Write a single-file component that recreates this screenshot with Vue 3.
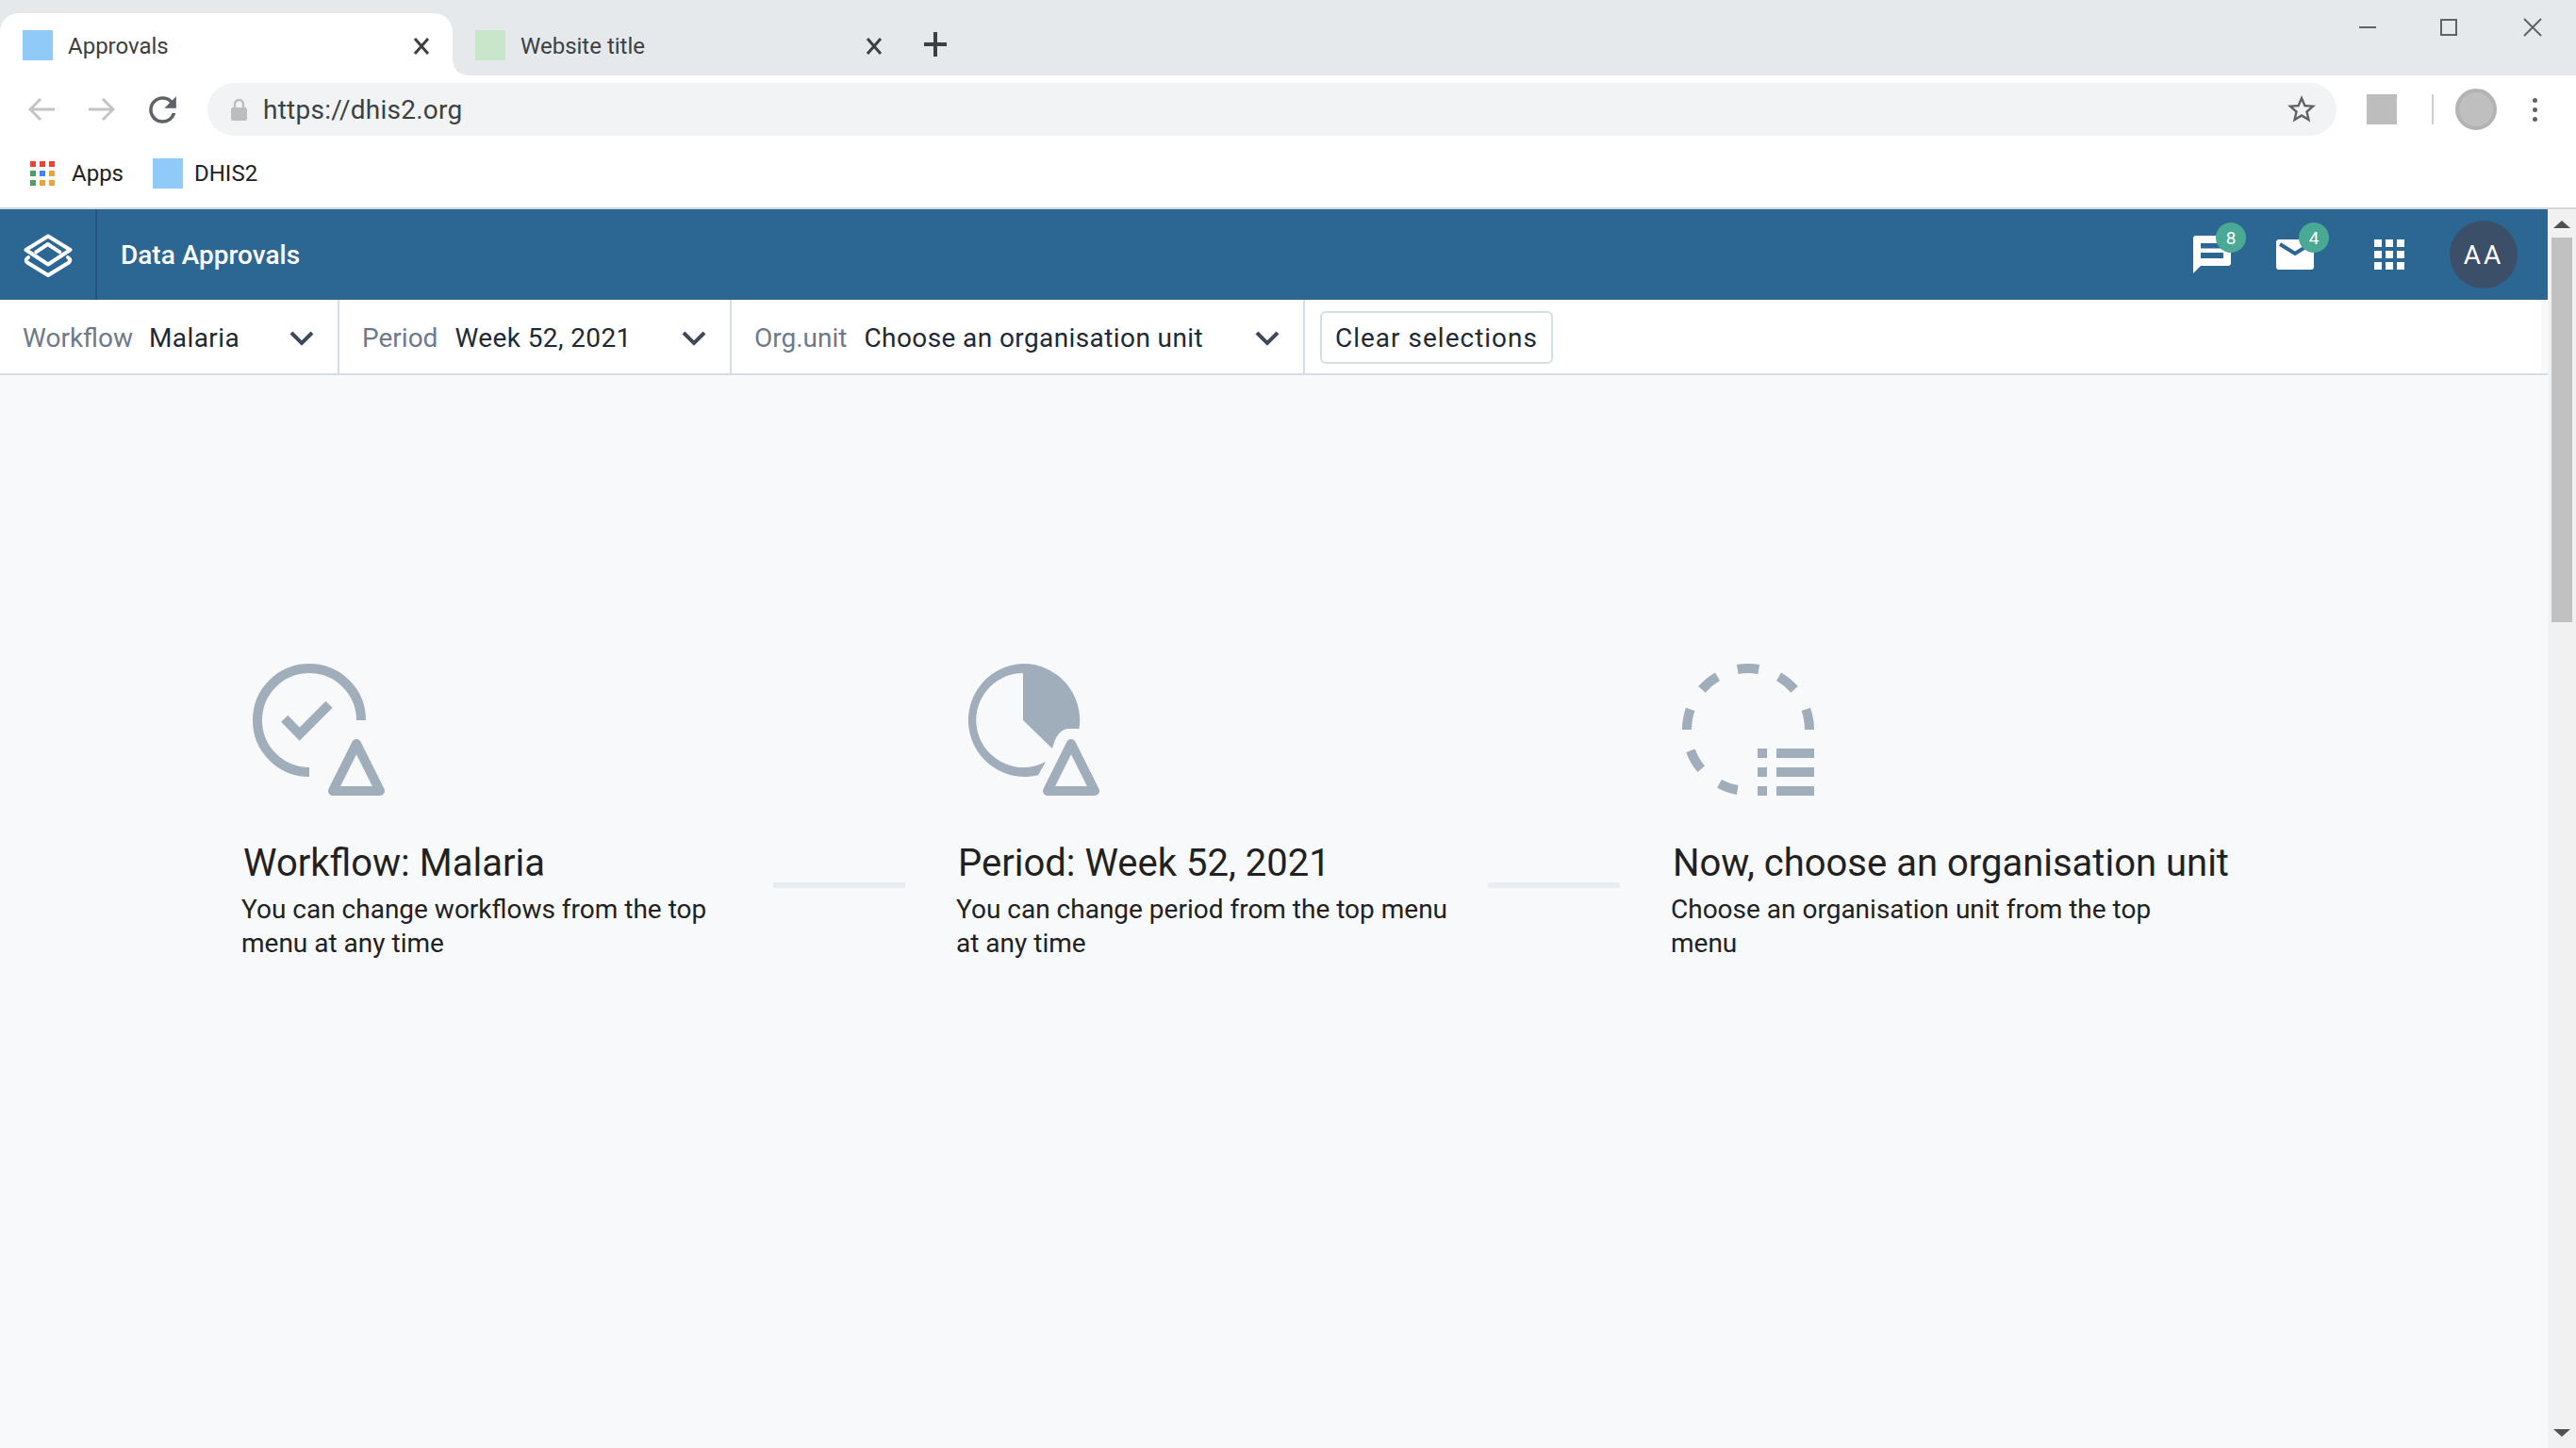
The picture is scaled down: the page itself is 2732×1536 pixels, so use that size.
<script setup>
const pt = (deg, r = 65) => {
  const a = (deg * Math.PI) / 180
  return `${(75 + r * Math.sin(a)).toFixed(2)} ${(70 - r * Math.cos(a)).toFixed(2)}`
}
const dashes = [[-10, 10], [30, 49], [70.6, 90], [-90, -70.6], [-49, -30], [-130, -110], [-170, -152]]
const dashPaths = dashes.map(([a, b]) => `M${pt(a)} A65 65 0 0 1 ${pt(b)}`)
const appColors = ['#ea4335', '#ea4335', '#ea4335', '#4f9d69', '#4285f4', '#e8a33d', '#4f9d69', '#e8a33d', '#e8a33d']
const filters = [
  { label: 'Workflow', value: 'Malaria', cls: 'f1' },
  { label: 'Period', value: 'Week 52, 2021', cls: 'f2' },
  { label: 'Org.unit', value: 'Choose an organisation unit', cls: 'f3' },
]
</script>

<template>
  <div class="page">
    <div class="tabstrip">
      <div class="tab active">
        <span class="fav blue"></span>
        <span class="tab-title">Approvals</span>
        <svg class="tab-x" width="20" height="20" viewBox="0 0 20 20"><path d="M3 2l14 16M17 2L3 18" stroke="#3c4043" stroke-width="3" fill="none" /></svg>
      </div>
      <div class="tab">
        <span class="fav green"></span>
        <span class="tab-title">Website title</span>
        <svg class="tab-x" width="20" height="20" viewBox="0 0 20 20"><path d="M3 2l14 16M17 2L3 18" stroke="#3c4043" stroke-width="3" fill="none" /></svg>
      </div>
      <svg class="plus" width="24" height="26" viewBox="0 0 24 26"><path d="M12 0v26M0 13h24" stroke="#3c4043" stroke-width="4" fill="none" /></svg>
      <div class="winctl">
        <svg width="18" height="18" viewBox="0 0 18 18"><path d="M0 9h18" stroke="#5f6368" stroke-width="2" /></svg>
        <svg class="maxi" width="18" height="18" viewBox="0 0 18 18"><rect x="1" y="1" width="16" height="16" fill="none" stroke="#5f6368" stroke-width="2" /></svg>
        <svg width="20" height="20" viewBox="0 0 20 20"><path d="M1 1l18 18M19 1L1 19" stroke="#5f6368" stroke-width="2" fill="none" /></svg>
      </div>
    </div>

    <div class="toolbar">
      <div class="nav">
        <svg width="28" height="24" viewBox="0 0 28 24"><path d="M28 12H2M13 1L2 12l11 11" stroke="#c4c4c4" stroke-width="3" fill="none" /></svg>
        <svg width="28" height="24" viewBox="0 0 28 24"><path d="M0 12h26M15 1l11 11-11 11" stroke="#c4c4c4" stroke-width="3" fill="none" /></svg>
        <svg class="reload" width="43" height="43" viewBox="0 0 24 24"><path fill="#5f6368" d="M17.65 6.35A7.958 7.958 0 0 0 12 4c-4.42 0-7.99 3.58-7.99 8s3.57 8 7.99 8c3.73 0 6.84-2.55 7.73-6h-2.08A5.99 5.99 0 0 1 12 18c-3.31 0-6-2.69-6-6s2.69-6 6-6c1.66 0 3.14.69 4.22 1.78L13 11h7V4l-2.35 2.35z" /></svg>
      </div>
      <div class="omnibox">
        <svg width="17" height="23" viewBox="0 0 17 23"><path d="M4 10V5.5a4.5 4.5 0 0 1 9 0V10" fill="none" stroke="#bdbdbd" stroke-width="2.4" /><rect y="9" width="17" height="14" rx="2" fill="#bdbdbd" /></svg>
        <span class="url">https://dhis2.org</span>
        <svg class="star" width="36" height="36" viewBox="0 0 24 24"><path fill="#5f6368" d="M22 9.24l-7.19-.62L12 2 9.19 8.63 2 9.24l5.46 4.73L5.82 21 12 17.27 18.18 21l-1.63-7.03L22 9.24zM12 15.4l-3.76 2.27 1-4.28-3.32-2.88 4.38-.38L12 6.1l1.71 4.04 4.38.38-3.32 2.88 1 4.28L12 15.4z" /></svg>
      </div>
      <span class="ext"></span>
      <span class="tooldiv"></span>
      <span class="profile"></span>
      <div class="dots"><i></i><i></i><i></i></div>
    </div>

    <div class="bookmarks">
      <div class="appsgrid"><i v-for="(c, i) in appColors" :key="i" :style="{ background: c }"></i></div>
      <span class="bm-text">Apps</span>
      <span class="fav blue bm-fav"></span>
      <span class="bm-text">DHIS2</span>
    </div>

    <div class="viewport">
      <div class="app">
        <header class="headerbar">
          <div class="logo">
            <svg width="54" height="48" viewBox="0 0 54 48" fill="none" stroke="#fff" stroke-width="4" stroke-linejoin="round" stroke-linecap="round">
              <path d="M27 4.5L50.5 19 27 34.5 3.5 19z" />
              <path d="M14.3 21.3L26.7 13l12.6 8.3" />
              <path d="M6 27Q2 30 5 32.500L27 46 49 32.500Q52 30 48 27" />
            </svg>
          </div>
          <div class="title">Data Approvals</div>
          <div class="hicons">
            <div class="hicon chat">
              <svg width="40" height="40" viewBox="0 0 40 40"><path fill="#fff" fill-rule="evenodd" d="M3 0h34a3 3 0 0 1 3 3v26a3 3 0 0 1-3 3H8l-8 8V3a3 3 0 0 1 3-3zM8 8v5.500h24V8zM8 18v6h24v-6z" /></svg>
              <span class="badge">8</span>
            </div>
            <div class="hicon mail">
              <svg width="40" height="32" viewBox="0 0 40 32"><path fill="#fff" d="M3 0h34a3 3 0 0 1 3 3v26a3 3 0 0 1-3 3H3a3 3 0 0 1-3-3V3a3 3 0 0 1 3-3z" /><path d="M4 5l16 10L36 5" fill="none" stroke="#2c6693" stroke-width="4" /></svg>
              <span class="badge">4</span>
            </div>
            <div class="hgrid"><i v-for="n in 9" :key="n"></i></div>
            <div class="avatar">AA</div>
          </div>
        </header>

        <div class="filters">
          <div v-for="f in filters" :key="f.label" class="filter" :class="f.cls">
            <span class="flabel">{{ f.label }}</span>
            <span class="fvalue">{{ f.value }}</span>
            <svg class="chev" width="26" height="16" viewBox="0 0 26 16"><path d="M2 2l11 11L24 2" fill="none" stroke="#404b5a" stroke-width="4" /></svg>
          </div>
          <button class="clear">Clear selections</button>
        </div>

        <main class="steps">
          <section class="step">
            <svg class="sicon" width="160" height="150" viewBox="0 0 160 150" fill="none" stroke="#a0adba" stroke-width="10">
              <path d="M130 60A55 55 0 1 0 75 115" />
              <path d="M48.7 58.3L64.7 74.7 96 43.3" />
              <path d="M125 85L100 135H150z" stroke-linejoin="round" />
            </svg>
            <h2>Workflow: Malaria</h2>
            <p>You can change workflows from the top menu at any time</p>
          </section>
          <div class="connector"></div>
          <section class="step">
            <svg class="sicon second" width="160" height="150" viewBox="0 0 160 150" fill="none" stroke="#a0adba" stroke-width="10">
              <path fill="#a0adba" stroke="none" d="M75 0A60 60 0 0 1 134.5 69L124 69Q111 69 106 90L75 60Z" />
              <path fill="#a0adba" stroke="none" d="M91 118.3A60 60 0 1 1 75 0V10A50 50 0 1 0 99 104Z" />
              <path d="M125 85L100 135H150z" stroke-linejoin="round" />
            </svg>
            <h2>Period: Week 52, 2021</h2>
            <p>You can change period from the top menu at any time</p>
          </section>
          <div class="connector"></div>
          <section class="step">
            <svg class="sicon third" width="160" height="150" viewBox="0 0 160 150" fill="none" stroke="#a0adba" stroke-width="10">
              <path v-for="(d, i) in dashPaths" :key="i" :d="d" />
              <g fill="#a0adba" stroke="none">
                <rect x="85" y="90" width="10" height="10" /><rect x="105" y="90" width="40" height="10" />
                <rect x="85" y="110" width="10" height="10" /><rect x="105" y="110" width="40" height="10" />
                <rect x="85" y="130" width="10" height="10" /><rect x="105" y="130" width="40" height="10" />
              </g>
            </svg>
            <h2>Now, choose an organisation unit</h2>
            <p>Choose an organisation unit from the top menu</p>
          </section>
        </main>
      </div>

      <div class="scrollbar">
        <span class="arrow up"></span>
        <span class="thumb"></span>
        <span class="arrow down"></span>
      </div>
    </div>
  </div>
</template>

<style>
html, body { margin: 0; padding: 0; background: #fff; overflow: hidden; }
</style>

<style scoped>
.page { width: 2732px; height: 1536px; display: flex; flex-direction: column; font-family: Roboto, "Liberation Sans", sans-serif; overflow: hidden; }

.tabstrip { height: 80px; flex: none; background: #e6e9ec; display: flex; align-items: flex-end; }
.tab { width: 480px; height: 66px; flex: none; display: flex; align-items: center; padding: 2px 0 0 24px; box-sizing: border-box; position: relative; color: #3c4043; }
.tab.active { background: #fff; border-radius: 20px 20px 0 0; }
.tab.active::after { content: ""; position: absolute; right: -16px; bottom: 0; width: 16px; height: 16px; background: radial-gradient(circle at 100% 0, #e6e9ec 15.5px, #fff 16px); }
.fav { width: 32px; height: 32px; flex: none; display: block; }
.fav.blue { background: #90caf9; }
.fav.green { background: #c8e6c9; }
.tab-title { font-size: 24px; margin-left: 16px; padding-top: 2px; flex: 1; }
.tab-x { position: absolute; right: 23px; top: 25px; }
.plus { margin: 0 0 20px 20px; }
.winctl { margin-left: auto; align-self: flex-start; display: flex; align-items: center; gap: 68px; padding: 19px 36px 0 0; }
.maxi { margin-right: 2px; }

.toolbar { height: 72px; flex: none; box-sizing: border-box; background: #fff; display: flex; align-items: center; }
.nav { width: 220px; flex: none; display: flex; align-items: center; padding-left: 30px; box-sizing: border-box; gap: 36px; }
.reload { margin-left: -7px; }
.omnibox { width: 2258px; height: 56px; flex: none; border-radius: 28px; background: #f1f3f4; display: flex; align-items: center; padding-left: 25px; box-sizing: border-box; }
.url { font-size: 28px; letter-spacing: .25px; color: #3c4043; margin-left: 17px; flex: 1; }
.star { margin-right: 19px; }
.ext { width: 32px; height: 32px; background: #bdbdbd; margin-left: 32px; flex: none; }
.tooldiv { width: 2px; height: 32px; background: #cfcfcf; margin-left: 37px; flex: none; }
.profile { width: 44px; height: 44px; border-radius: 50%; background: #bfbfbf; border: 4px solid #b3b3b3; box-sizing: border-box; margin-left: 23px; flex: none; }
.dots { display: flex; flex-direction: column; gap: 5px; margin-left: 38px; }
.dots i { width: 5px; height: 5px; border-radius: 50%; background: #5f6368; display: block; }

.bookmarks { height: 70px; flex: none; background: #fff; display: flex; align-items: center; padding: 0 0 4px 32px; box-sizing: border-box; border-bottom: 2px solid #d5d8db; }
.appsgrid { display: grid; grid-template-columns: repeat(3, 6px); grid-auto-rows: 6px; gap: 4px; }
.appsgrid i { display: block; }
.bm-text { font-size: 24px; color: #202124; margin-left: 18px; }
.bm-fav { margin-left: 31px; }
.bm-fav + .bm-text { margin-left: 12px; }

.viewport { flex: 1; min-height: 0; display: flex; }
.app { flex: 1; min-width: 0; background: #f8f9fa; display: flex; flex-direction: column; }
.headerbar { height: 96px; flex: none; background: #2c6693; display: flex; align-items: center; }
.logo { width: 103px; height: 96px; flex: none; box-sizing: border-box; border-right: 2px solid #24557c; display: flex; align-items: center; padding-left: 24px; }
.title { font-size: 28px; font-weight: 500; color: #fff; margin-left: 25px; }
.hicons { margin-left: auto; display: flex; align-items: center; }
.hicon { position: relative; display: flex; }
.mail { margin-left: 48px; }
.badge { position: absolute; left: 24px; width: 32px; height: 32px; border-radius: 50%; background: #4aa995; color: #fff; font-size: 19px; display: flex; align-items: center; justify-content: center; }
.chat .badge { top: -14px; }
.mail .badge { top: -18px; }
.hgrid { display: grid; grid-template-columns: repeat(3, 8px); grid-auto-rows: 8px; gap: 4px; margin-left: 64px; }
.hgrid i { background: #fff; display: block; }
.avatar { width: 72px; height: 72px; border-radius: 50%; background: #3b5068; color: #fff; font-size: 28px; letter-spacing: 3px; display: flex; align-items: center; justify-content: center; margin-left: 48px; margin-right: 32px; }

.filters { height: 80px; flex: none; box-sizing: border-box; background: linear-gradient(to right, #fff 2695px, #f8f9fa 2695px); border-bottom: 2px solid #d5dde5; display: flex; align-items: center; }
.filter { height: 78px; flex: none; box-sizing: border-box; border-right: 2px solid #d5dde5; display: flex; align-items: center; padding: 2px 0 0 24px; font-size: 28px; position: relative; }
.f1 { width: 360px; }
.f2 { width: 416px; }
.f3 { width: 608px; }
.flabel { color: #6e7a8a; margin-right: 17px; }
.f2 .flabel { margin-right: 18px; }
.f3 .flabel { margin-right: 18px; }
.fvalue { color: #212934; letter-spacing: .4px; }
.chev { position: absolute; right: 25px; top: 33px; }
.clear { margin: 2px 0 0 16px; width: 247px; height: 56px; box-sizing: border-box; background: #fff; border: 2px solid #d5dde5; border-radius: 6px; color: #212934; font: inherit; font-size: 28px; letter-spacing: 1px; padding: 1px 0 0; }

.steps { display: flex; align-items: flex-start; padding: 306px 0 0 256px; }
.step { width: 564px; flex: none; }
.sicon { display: block; margin-left: -3px; margin-bottom: 37px; }
.sicon.second { margin-left: -4px; }
.sicon.second path:last-child { transform: translateX(1px); }
.sicon.third { margin-left: 7px; }
.step h2 { margin: 0 0 0 2px; font-size: 40px; line-height: 50px; font-weight: 400; color: #212121; white-space: nowrap; }
.step p { margin: 6px 0 0; max-width: 530px; font-size: 28px; line-height: 36px; color: #212121; }
.connector { width: 140px; height: 6px; background: #e8edf2; margin: 232px 54px 0 0; flex: none; }

.scrollbar { width: 30px; flex: none; background: #f1f1f1; position: relative; display: flex; flex-direction: column; align-items: center; }
.thumb { width: 22px; height: 408px; background: #c1c1c1; display: block; margin-top: 10px; }
.arrow { width: 0; height: 0; border-left: 9px solid transparent; border-right: 9px solid transparent; display: block; }
.arrow.up { border-bottom: 8px solid #505050; margin-top: 12px; }
.arrow.down { border-top: 8px solid #505050; margin-top: auto; margin-bottom: 12px; }
</style>
